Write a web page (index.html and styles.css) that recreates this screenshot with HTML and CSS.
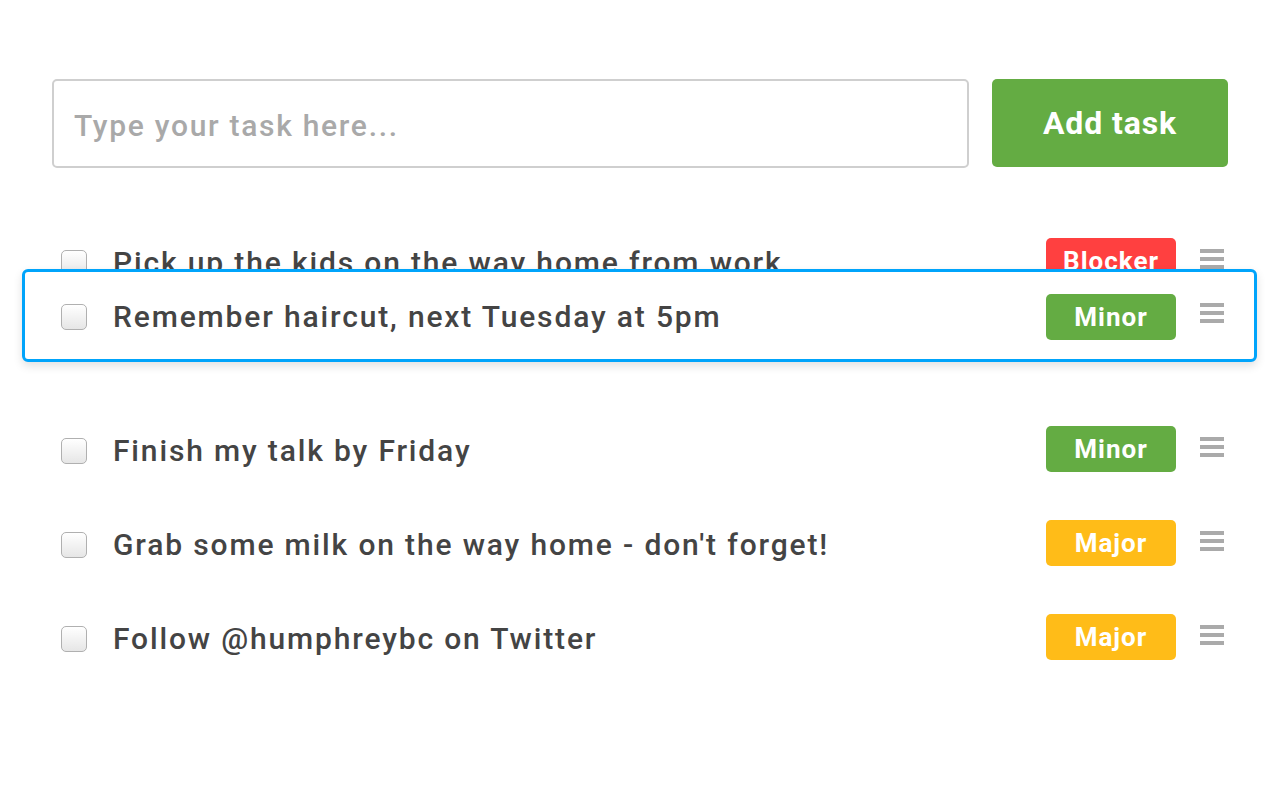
FILE: index.html
```html
<!DOCTYPE html>
<html>
<head>
<meta charset="utf-8">
<link rel="stylesheet" href="styles.css">
</head>
<body>
<div class="app">
  <form class="add-form">
    <input class="task-input" type="text" placeholder="Type your task here...">
    <button class="add-btn" type="button">Add task</button>
  </form>
  <ul class="tasks">
    <li class="task">
      <span class="check"></span>
      <span class="label">Pick up the kids on the way home from work</span>
      <span class="badge blocker">Blocker</span>
      <span class="handle"><i></i><i></i><i></i></span>
    </li>
    <li class="task placeholder"></li>
    <li class="task">
      <span class="check"></span>
      <span class="label">Finish my talk by Friday</span>
      <span class="badge minor">Minor</span>
      <span class="handle"><i></i><i></i><i></i></span>
    </li>
    <li class="task">
      <span class="check"></span>
      <span class="label">Grab some milk on the way home - don't forget!</span>
      <span class="badge major">Major</span>
      <span class="handle"><i></i><i></i><i></i></span>
    </li>
    <li class="task">
      <span class="check"></span>
      <span class="label">Follow @humphreybc on Twitter</span>
      <span class="badge major">Major</span>
      <span class="handle"><i></i><i></i><i></i></span>
    </li>
  </ul>
  <div class="task dragging">
    <span class="check"></span>
    <span class="label">Remember haircut, next Tuesday at 5pm</span>
    <span class="badge minor">Minor</span>
    <span class="handle"><i></i><i></i><i></i></span>
  </div>
</div>
</body>
</html>
```
FILE: styles.css
```css
html, body {
  margin: 0;
  padding: 0;
  background: #fff;
}
body {
  font-family: Roboto, "Liberation Sans", sans-serif;
  color: #444;
}
.app {
  position: relative;
  padding: 79px 52px 0 52px;
}
.add-form {
  display: flex;
  gap: 23px;
  margin: 0;
}
.task-input {
  flex: 1;
  height: 89px;
  box-sizing: border-box;
  border: 2px solid #cfcfcf;
  border-radius: 5px;
  padding: 4px 20px 0 20px;
  font-family: Roboto, "Liberation Sans", sans-serif;
  font-size: 30px;
  font-weight: 500;
  letter-spacing: 1.7px;
  color: #444;
  outline: none;
}
.task-input::placeholder {
  color: #a9a9a9;
}
.add-btn {
  width: 236px;
  height: 88px;
  border: none;
  border-radius: 5px;
  background: #64ac43;
  color: #fff;
  font-family: Roboto, "Liberation Sans", sans-serif;
  font-size: 32px;
  font-weight: 700;
  letter-spacing: 0.9px;
  padding: 0;
}
.tasks {
  list-style: none;
  margin: 47px 0 0 0;
  padding: 0;
}
.task {
  display: flex;
  align-items: center;
  height: 94px;
  padding: 0 4px 0 9px;
  box-sizing: border-box;
}
.check {
  width: 26px;
  height: 26px;
  box-sizing: border-box;
  border: 1.5px solid #b0b0b0;
  border-radius: 5px;
  background: linear-gradient(#ffffff, #e6e6e6);
  flex: none;
  margin-top: 1px;
}
.label {
  flex: 1;
  margin-left: 26px;
  font-size: 30px;
  font-weight: 500;
  letter-spacing: 1.85px;
  color: #444;
  white-space: nowrap;
}
.badge {
  width: 130px;
  height: 46px;
  border-radius: 5px;
  color: #fff;
  font-size: 26px;
  font-weight: 700;
  letter-spacing: 1px;
  display: flex;
  align-items: center;
  justify-content: center;
  flex: none;
  margin-top: -2px;
}
.blocker { background: #ff4040; }
.minor { background: #64ac43; }
.major { background: #ffbc18; }
.handle {
  margin-left: 24px;
  width: 24px;
  display: flex;
  flex-direction: column;
  gap: 4px;
  margin-top: -7px;
  flex: none;
}
.handle i {
  display: block;
  height: 4px;
  background: #aaa;
}
.dragging {
  position: absolute;
  left: 22px;
  top: 269px;
  width: 1235px;
  height: 93px;
  border: 3px solid #00a4fb;
  border-radius: 6px;
  background: #fff;
  padding: 2px 30px 0 36px;
  box-shadow: 0 4px 10px rgba(0, 0, 0, 0.12);
}
.dragging .badge {
  margin-top: 0;
}
```
